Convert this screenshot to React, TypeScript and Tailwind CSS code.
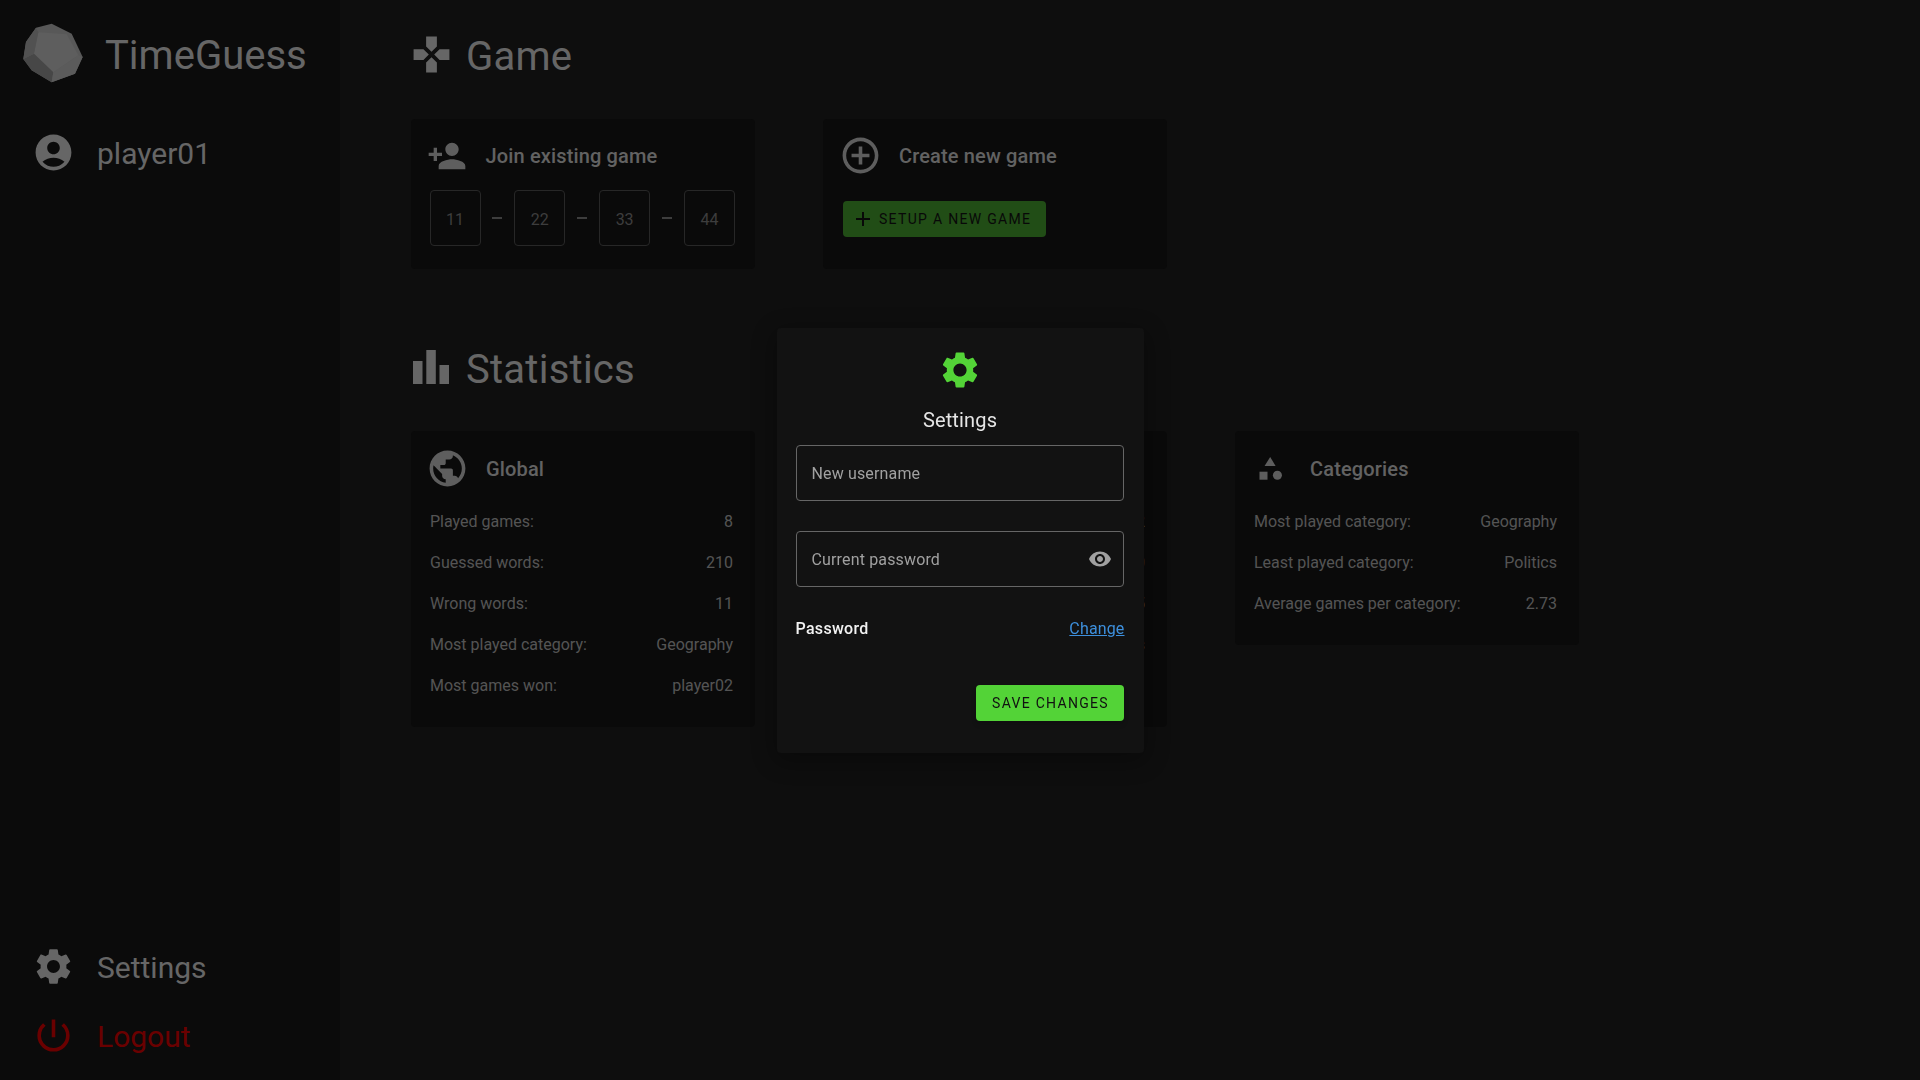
import type { ReactNode } from "react";
import {
  MdAccountCircle,
  MdAdd,
  MdAddCircleOutline,
  MdGames,
  MdPersonAdd,
  MdPowerSettingsNew,
  MdPublic,
  MdSettings,
  MdVisibility,
} from "react-icons/md";

const globalRows = [
  ["Played games:", "8"],
  ["Guessed words:", "210"],
  ["Wrong words:", "11"],
  ["Most played category:", "Geography"],
  ["Most games won:", "player02"],
];

const personalRows = [
  ["Played games:", "2"],
  ["Guessed words:", "40"],
  ["Wrong words:", "5"],
  ["Most played category:", "Sports"],
];

const categoryRows = [
  ["Most played category:", "Geography"],
  ["Least played category:", "Politics"],
  ["Average games per category:", "2.73"],
];

function Logo() {
  return (
    <svg viewBox="36 36 186 184" className="h-[62px] w-[62px] shrink-0">
      <polygon points="78,52 125,40 185,70 218,140 195,190 125,216 65,180 40,146 48,95" fill="#b0b0b0" />
      <polygon points="85,66 170,72 205,135 130,186 72,130" fill="#bcbcbc" />
      <polygon points="72,130 130,186 125,216 65,180 40,146" fill="#8e8e8e" />
      <polygon points="48,95 78,52 85,66 72,130 40,146" fill="#a2a2a2" />
      <polygon points="205,135 218,140 195,190 125,216 130,186" fill="#b6b6b6" />
    </svg>
  );
}

function BarsIcon() {
  return (
    <svg viewBox="0 0 36 34" className="h-[34px] w-[36px]" fill="currentColor">
      <rect x="0" y="11" width="9.5" height="23" />
      <rect x="13.3" y="0" width="9.5" height="34" />
      <rect x="26.5" y="15" width="9.5" height="19" />
    </svg>
  );
}

function ShapesIcon() {
  return (
    <svg viewBox="0 0 24 23" className="h-[23px] w-[24px] -translate-x-px" fill="currentColor">
      <polygon points="11.2,0 16.6,9 5.6,9" />
      <rect x="0.5" y="14.7" width="8" height="8" />
      <circle cx="18.4" cy="18.3" r="4.5" />
    </svg>
  );
}

function NavItem({ icon, label, color }: { icon: ReactNode; label: string; color: string }) {
  return (
    <div className={`flex h-[56px] items-center text-[30px] ${color}`}>
      <div className="flex w-[44px] justify-center">{icon}</div>
      <span className="ml-[22px] mt-[2px]">{label}</span>
    </div>
  );
}

function Section({ icon, title, gridGap, children }: { icon: ReactNode; title: string; gridGap: string; children: ReactNode }) {
  return (
    <section>
      <div className="flex h-[60px] items-center text-[40px] tracking-[0.25px] text-[#cccccc]">
        <div className="-ml-[2px] flex w-[44px] -translate-y-[3px] justify-center">{icon}</div>
        <h2 className="ml-[13px]">{title}</h2>
      </div>
      <div className={`${gridGap} grid grid-cols-[344px_344px_344px] items-start gap-x-[68px]`}>{children}</div>
    </section>
  );
}

function CardHeader({ icon, title }: { icon: ReactNode; title: string }) {
  return (
    <div className="flex h-[43px] items-center">
      <div className="-ml-[4px] flex w-[43px] justify-center text-[#bdbdbd]">{icon}</div>
      <h3 className="ml-[17px] text-[20px] font-medium tracking-[0.15px] text-[#c4c4c4]">{title}</h3>
    </div>
  );
}

function StatCard({ icon, title, rows, className = "" }: { icon: ReactNode; title: string; rows: string[][]; className?: string }) {
  return (
    <div className={`rounded bg-[#141414] pb-[21px] pl-[19px] pr-[22px] pt-[16px] ${className}`}>
      <CardHeader icon={icon} title={title} />
      <div className="mt-[11px]">
        {rows.map(([label, value]) => (
          <div key={label} className="flex h-[41px] items-center justify-between text-base text-[#a8a8a8]">
            <span>{label}</span>
            <span>{value}</span>
          </div>
        ))}
      </div>
    </div>
  );
}

function CodeInput({ value }: { value: string }) {
  return (
    <input
      readOnly
      value={value}
      className="h-[56px] w-[51px] rounded border border-[#4f4f4f] bg-transparent pt-[2px] text-center text-base text-[#7a7a7a] outline-none"
    />
  );
}

function Dash() {
  return <div className="h-[2px] w-[10px] bg-[#7a7a7a]" />;
}

function SettingsDialog() {
  return (
    <div className="fixed inset-0 flex items-center justify-center bg-black/50">
      <div className="flex h-[425px] w-[367px] flex-col rounded bg-[#121212] px-[19px] pt-[20px] tracking-[0.15px] shadow-[0_6px_24px_4px_rgba(0,0,0,0.3)]">
        <div className="flex justify-center text-[#53d337]">
          <MdSettings size={44} />
        </div>
        <h2 className="mt-[13px] text-center text-[20px] leading-[30px] text-[#e6e6e6]">Settings</h2>
        <input
          placeholder="New username"
          className="mt-[10px] h-[56px] w-[328px] rounded border border-[#666666] bg-transparent px-[15px] pt-[2px] text-base text-white outline-none placeholder:text-[#a0a0a0]"
        />
        <div className="mt-[30px] flex h-[56px] w-[328px] items-center rounded border border-[#666666] pl-[15px] pr-[11px]">
          <input
            placeholder="Current password"
            className="min-w-0 flex-1 bg-transparent pt-[2px] text-base text-white outline-none placeholder:text-[#a0a0a0]"
          />
          <MdVisibility size={24} className="text-[#a0a0a0]" />
        </div>
        <div className="mt-[28px] flex h-[28px] w-[329px] items-center justify-between text-base">
          <span className="font-medium tracking-[0.3px] text-[#f2f2f2]">Password</span>
          <a href="#" className="text-[#3d8fdc] underline">
            Change
          </a>
        </div>
        <div className="mt-[42px] flex w-[328px] justify-end">
          <button className="h-[36px] w-[148px] rounded bg-[#53d337] pl-[2px] text-sm font-normal tracking-[1.3px] text-[#111111] shadow-md">
            SAVE CHANGES
          </button>
        </div>
      </div>
    </div>
  );
}

export default function App() {
  return (
    <div className="flex h-screen w-full overflow-hidden bg-[#1c1c1c] font-['Roboto',sans-serif]">
      <aside className="flex h-full w-[340px] shrink-0 flex-col bg-[#161616] pl-[31px]">
        <div className="-ml-[9px] mt-[22px] flex items-center text-[40px] text-[#cccccc]">
          <Logo />
          <span className="ml-[21px] translate-y-[3px]">TimeGuess</span>
        </div>
        <div className="mt-[40px]">
          <NavItem icon={<MdAccountCircle size={43} />} label="player01" color="text-[#cccccc]" />
        </div>
        <div className="mt-auto mb-[17px] flex flex-col gap-[13px]">
          <NavItem icon={<MdSettings size={43} />} label="Settings" color="text-[#cccccc]" />
          <NavItem icon={<MdPowerSettingsNew size={43} />} label="Logout" color="text-[#d40000]" />
        </div>
      </aside>

      <main className="flex-1 pl-[71px] pt-[27px]">
        <Section icon={<MdGames size={43} />} title="Game" gridGap="mt-[32px]">
          <div className="h-[150px] rounded bg-[#141414] pl-[18.5px] pr-[20px] pt-[15px]">
            <CardHeader icon={<MdPersonAdd size={40} />} title="Join existing game" />
            <div className="mt-[13px] flex items-center justify-between">
              <CodeInput value="11" />
              <Dash />
              <CodeInput value="22" />
              <Dash />
              <CodeInput value="33" />
              <Dash />
              <CodeInput value="44" />
            </div>
          </div>
          <div className="h-[150px] rounded bg-[#141414] pl-[20px] pr-[21px] pt-[15px]">
            <CardHeader icon={<MdAddCircleOutline size={43} />} title="Create new game" />
            <button className="mt-[24px] flex h-[36px] w-[203px] items-center gap-[4px] rounded bg-[#429a2c] pl-[8px] text-sm font-normal tracking-[1.3px] text-[#111111]">
              <MdAdd size={24} />
              SETUP A NEW GAME
            </button>
          </div>
        </Section>

        <div className="mt-[71px]">
          <Section icon={<BarsIcon />} title="Statistics" gridGap="mt-[31px]">
            <StatCard icon={<MdPublic size={43} />} title="Global" rows={globalRows} />
            <StatCard icon={<MdAccountCircle size={43} />} title="Personal" rows={personalRows} className="min-h-[296px]" />
            <StatCard icon={<ShapesIcon />} title="Categories" rows={categoryRows} />
          </Section>
        </div>
      </main>

      <SettingsDialog />
    </div>
  );
}
